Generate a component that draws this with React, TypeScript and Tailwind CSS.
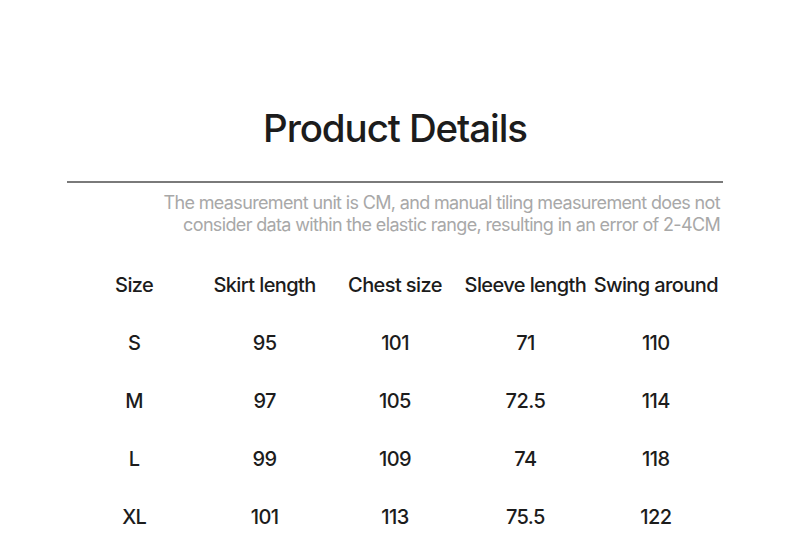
import React from "react";

const headers = ["Size", "Skirt length", "Chest size", "Sleeve length", "Swing around"];

const rows = [
  ["S", "95", "101", "71", "110"],
  ["M", "97", "105", "72.5", "114"],
  ["L", "99", "109", "74", "118"],
  ["XL", "101", "113", "75.5", "122"],
];

const App = () => {
  return (
    <div className="w-[790px] h-[545px] bg-white font-['Inter',sans-serif] text-[#1c1c1c] overflow-hidden">
      <h1 className="pt-[104px] text-center text-[38.5px] leading-[48px] tracking-[-1.1px] font-medium">
        Product Details
      </h1>
      <div className="mx-[67px] mt-[29px] h-[2px] bg-[#7a7a7a]" />
      <p className="mr-[70px] mt-[9px] text-right text-[18px] leading-[22px] tracking-[-0.65px] text-[#a8a8a8]">
        The measurement unit is CM, and manual tiling measurement does not
        <br />
        consider data within the elastic range, resulting in an error of 2-4CM
      </p>
      {/* size table */}
      <div className="ml-[69px] mt-[34px] w-[652px]">
        <div className="grid grid-cols-5 h-[30px] items-center text-[20px] tracking-[-0.6px] font-medium">
          {headers.map((h) => (
            <div key={h} className="text-center whitespace-nowrap">
              {h}
            </div>
          ))}
        </div>
        {rows.map((r) => (
          <div
            key={r[0]}
            className="grid grid-cols-5 mt-[28px] h-[30px] items-center text-[20px] tracking-[-0.6px] font-medium"
          >
            {r.map((c, i) => (
              <div key={i} className="text-center">
                {c}
              </div>
            ))}
          </div>
        ))}
      </div>
    </div>
  );
};

export default App;
